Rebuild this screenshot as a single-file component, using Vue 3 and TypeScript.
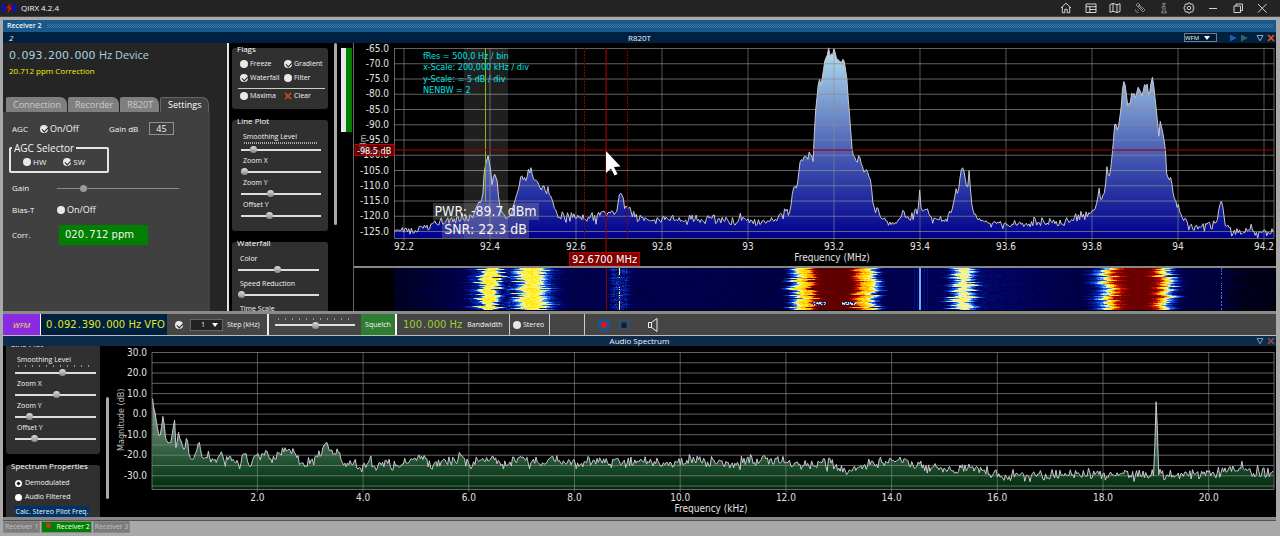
<script setup lang="ts">
import { onMounted, ref } from 'vue'

type Point = [number, number]

function createRandom(seed: number): () => number {
  let state = seed
  return () => {
    state = (state * 1664525 + 1013904223) % 4294967296
    return state / 4294967296
  }
}

function interpolate(points: Point[], x: number): number {
  if (x <= points[0][0]) return points[0][1]
  for (let i = 1; i < points.length; i++) {
    const [x1, y1] = points[i]
    if (x <= x1) {
      const [x0, y0] = points[i - 1]
      return y0 + ((y1 - y0) * (x - x0)) / (x1 - x0 || 1)
    }
  }
  return points[points.length - 1][1]
}

function buildTrace(points: Point[], from: number, to: number, noise: number, max: number, seed: number): string {
  const random = createRandom(seed)
  const out: string[] = []
  for (let x = from; x <= to; x += 1.3) {
    const base = interpolate(points, x)
    const slope = Math.abs(interpolate(points, x + 1) - interpolate(points, x - 1))
    const amplitude = slope > 3 ? noise * 0.3 : noise
    const spike = random() > 0.93 ? noise * 0.9 : 0
    const sum = random() + random() - 1
    const y = Math.min(max, base + sum * amplitude * 1.3 - (random() > 0.5 ? spike : -spike))
    out.push(`${x.toFixed(1)},${y.toFixed(1)}`)
  }
  return out.join(' ')
}

const rfEnvelope: Point[] = [
  [394, 232], [417, 229], [440, 223], [463, 220], [473, 216], [479, 201], [482, 199], [485, 165], [488, 157],
  [491, 171], [492, 185], [494, 173], [497, 178], [499, 203], [503, 215], [510, 218], [516, 197], [520, 183],
  [522, 177], [527, 175], [530, 174], [531, 167], [533, 178], [540, 186], [550, 194], [555, 207], [558, 217],
  [595, 217], [606, 213], [617, 211], [620, 190], [622, 200], [623, 196], [625, 212], [629, 206], [632, 214],
  [640, 219], [700, 219], [740, 221], [770, 222], [780, 218], [787, 211], [790, 212], [793, 188], [797, 188],
  [800, 163], [807, 157], [812, 155], [813, 163], [815, 120], [817, 93], [819, 82], [821, 85], [825, 60],
  [829, 50], [832, 57], [834, 49], [837, 60], [844, 60], [847, 80], [850, 123], [853, 153], [857, 163],
  [859, 155], [862, 167], [867, 168], [871, 183], [873, 203], [876, 213], [877, 205], [880, 215], [887, 222],
  [897, 223], [903, 213], [910, 220], [917, 210], [919, 205], [920, 184], [921, 207], [927, 208], [930, 217],
  [943, 222], [950, 215], [953, 207], [956, 190], [958, 195], [960, 177], [962.5, 163], [965, 177], [966, 187],
  [968, 187], [969, 171], [972, 207], [975, 217], [980, 221], [990, 224], [1027, 223], [1060, 222], [1077, 217],
  [1090, 213], [1097, 203], [1099, 187], [1101, 202], [1105, 190], [1107, 167], [1109, 180], [1111, 167],
  [1113, 147], [1115, 120], [1117, 130], [1119, 125], [1121, 108], [1123.5, 77], [1126, 90], [1128, 108],
  [1130, 100], [1132, 93], [1135, 100], [1138, 88], [1142, 95], [1145, 83], [1150, 93], [1152, 75], [1154, 88],
  [1157, 117], [1159, 138], [1160, 120], [1163, 133], [1166, 153], [1167, 183], [1171, 178], [1173, 193],
  [1178, 207], [1183, 218], [1190, 226], [1210, 225], [1217, 222], [1219, 208], [1221, 202], [1223, 207],
  [1225, 225], [1233, 232], [1274, 232],
]

const audioEnvelope: Point[] = [
  [152, 383], [153, 412], [154, 405], [157, 427], [160, 438], [163.5, 412], [165, 437], [170, 448], [174.7, 419],
  [176, 450], [178, 435], [182, 443], [184, 453], [187, 435], [189, 455], [192, 460], [196, 454], [199, 440],
  [202, 458], [207, 455], [217, 463], [221, 450], [225, 464], [230, 457], [240, 468], [243, 450], [250, 468],
  [255, 453], [258, 458], [267, 455], [273, 463], [285, 447], [288, 454], [292, 448], [297, 457], [308, 468],
  [313, 457], [328, 447], [340, 457], [345, 469], [350, 462], [360, 467], [370, 462], [376, 468], [384, 461],
  [394, 467], [402, 465], [408, 461], [420, 456], [432, 467], [445, 462], [463, 457], [470, 465], [495, 459],
  [505, 464], [520, 458], [535, 465], [553, 457], [560, 463], [590, 462], [640, 462], [660, 466], [690, 459],
  [710, 463], [730, 465], [750, 460], [790, 462], [800, 467], [827, 462], [848, 470], [860, 468], [888, 460],
  [905, 460], [927, 467], [950, 470], [967, 468], [1000, 474], [1009, 481], [1013, 475], [1050, 476], [1080, 474],
  [1110, 475], [1135, 472], [1154, 475], [1156, 401], [1157, 401], [1158, 475], [1200, 474], [1230, 471],
  [1243, 469], [1255, 473], [1274, 471],
]

const rfTrace = buildTrace(rfEnvelope, 394.5, 1274, 4.5, 238, 77)
const audioTrace = buildTrace(audioEnvelope, 152.5, 1274, 5, 487, 2024)

const rfRows = Array.from({ length: 13 }, (_, i) => ({
  y: 48.5 + i * 15.25,
  label: (-65 - i * 5).toFixed(1),
}))
const rfColumns = ['92.2', '92.4', '92.6', '92.8', '93', '93.2', '93.4', '93.6', '93.8', '94', '94.2'].map((label, i) => ({
  x: 404 + i * 86,
  label,
}))
const audioRows = Array.from({ length: 14 }, (_, i) => ({
  y: 352.5 + i * 10.27,
  label: i % 2 === 0 && i < 13 ? (30 - i * 5).toFixed(1) : '',
}))
const audioColumns = Array.from({ length: 10 }, (_, i) => ({
  x: 257.4 + i * 105.7,
  label: (2 + i * 2).toFixed(1),
}))

const infoLines = ['fRes = 500,0 Hz / bin', 'x-Scale: 200,000 kHz / div', 'y-Scale: = 5 dB / div', 'NENBW = 2']

const linePlotSliders = [
  { id: 'rf-smooth', label: 'Smoothing Level', value: 13, ticks: 'fine' },
  { id: 'rf-zoom-x', label: 'Zoom X', value: 0, ticks: '' },
  { id: 'rf-zoom-y', label: 'Zoom Y', value: 36, ticks: '' },
  { id: 'rf-offset-y', label: 'Offset Y', value: 34, ticks: '' },
]
const waterfallSliders = [
  { id: 'wf-color', label: 'Color', value: 48 },
  { id: 'wf-speed', label: 'Speed Reduction', value: 0 },
  { id: 'wf-time', label: 'Time Scale', value: 0 },
]
const audioSliders = [
  { id: 'af-smooth', label: 'Smoothing Level', value: 60, ticks: 'coarse' },
  { id: 'af-zoom-x', label: 'Zoom X', value: 52, ticks: '' },
  { id: 'af-zoom-y', label: 'Zoom Y', value: 15, ticks: '' },
  { id: 'af-offset-y', label: 'Offset Y', value: 21, ticks: '' },
]

const waterfall = ref<HTMLCanvasElement | null>(null)

const wfProfile: Point[] = [
  [394, 0.02], [440, 0.06], [465, 0.09], [478, 0.2], [481, 0.4], [484, 0.54], [494, 0.56], [497, 0.44], [501, 0.2],
  [505, 0.1], [513, 0.2], [518, 0.38], [523, 0.52], [529, 0.56], [538, 0.54], [543, 0.44], [548, 0.26], [556, 0.12],
  [570, 0.08], [608, 0.08], [615, 0.14], [619, 0.19], [623, 0.14], [631, 0.08], [700, 0.08], [785, 0.07], [791, 0.22],
  [796, 0.42], [800, 0.58], [810, 0.67], [813, 0.86], [818, 1], [850, 1], [855, 0.84], [860, 0.67], [868, 0.6],
  [873, 0.42], [878, 0.2], [884, 0.08], [945, 0.1], [951, 0.24], [956, 0.44], [962, 0.49], [968, 0.47], [972, 0.34],
  [978, 0.12], [1080, 0.07], [1093, 0.16], [1103, 0.42], [1108, 0.6], [1114, 0.82], [1125, 0.97], [1148, 0.97],
  [1157, 0.82], [1162, 0.6], [1168, 0.4], [1175, 0.16], [1182, 0.07], [1225, 0.05], [1240, 0.01], [1274, 0],
]
const wfBounds = [489, 510, 532, 575, 619, 700, 834, 900, 920, 940, 962, 1040, 1138, 1200, 1280]
const wfColors: [number, number, number, number][] = [
  [0, 0, 0, 20], [0.1, 0, 0, 88], [0.22, 8, 50, 190], [0.34, 50, 140, 255], [0.43, 225, 240, 235], [0.5, 255, 248, 90],
  [0.6, 255, 228, 10], [0.7, 255, 150, 0], [0.8, 215, 25, 0], [0.92, 130, 0, 0], [1, 94, 0, 0],
]

function wfColor(level: number): [number, number, number] {
  const l = Math.max(0, Math.min(1, level))
  for (let i = 1; i < wfColors.length; i++) {
    const b = wfColors[i]
    if (l <= b[0]) {
      const a = wfColors[i - 1]
      const t = (l - a[0]) / (b[0] - a[0])
      return [a[1] + (b[1] - a[1]) * t, a[2] + (b[2] - a[2]) * t, a[3] + (b[3] - a[3]) * t]
    }
  }
  return [94, 0, 0]
}

onMounted(() => {
  const canvas = waterfall.value
  const context = canvas?.getContext('2d')
  if (!canvas || !context) return
  const { width, height } = canvas
  const image = context.createImageData(width, height)
  const random = createRandom(9)
  for (let row = 0; row < height; row++) {
    const shifts = wfBounds.map(() => (random() + random() - 1) * 8)
    const dash = random()
    const fade = row > 33 && row < 37
    let noise = 0
    for (let col = 0; col < width; col++) {
      const x = 394 + col
      const block = wfBounds.findIndex((b) => x < b)
      let level = interpolate(wfProfile, x + shifts[block])
      noise = noise * 0.5 + (random() - 0.5) * 0.5
      level += noise * (level > 0.15 && level < 0.9 ? 0.2 : 0.05)
      if (Math.abs(x - 619) < 9) level += random() > 0.8 ? 0.09 : 0
      if (x === 619 && (row < 6 || row > 32 || dash > 0.8)) level = 0.5
      if (x === 1221 && dash > 0.55) level = 0.32
      if (x === 920 || x === 919) level = 0.37
      if (x === 914 || x === 917 || x === 924 || x === 927) level = 0.14
      if (fade && ((x > 812 && x < 826) || (x > 841 && x < 856))) level = 0.12 + random() * 0.4
      const [r, g, b] = wfColor(level)
      const offset = (row * width + col) * 4
      image.data[offset] = r
      image.data[offset + 1] = g
      image.data[offset + 2] = b
      image.data[offset + 3] = 255
    }
  }
  context.putImageData(image, 0, 0)
})
</script>

<template>
  <div class="app">
    <header class="titlebar">
      <svg class="logo" viewBox="0 0 16 12" width="16" height="12" fill="none" stroke="#0a0af0" stroke-width="1.5">
        <path d="M2.500 2C0.600 4.500 0.600 7.500 2.500 10M5 3.300C3.900 5 3.900 7 5 8.700M13.500 2C15.400 4.500 15.400 7.500 13.500 10M11 3.300C12.100 5 12.100 7 11 8.700" />
        <path d="M10 1L5 6.500L8 6.300L6.500 11L11.500 5.200L8.500 5.500Z" fill="#f01010" stroke="none" />
      </svg>
      <h1>QIRX 4.2.4</h1>
      <nav class="window-tools">
        <button type="button" aria-label="Home">
          <svg viewBox="0 0 12 12"><path d="M1 6L6 1.200L11 6M2.300 5V10.800H4.800V7.300H7.200V10.800H9.700V5" /></svg>
        </button>
        <button type="button" aria-label="Layout">
          <svg viewBox="0 0 12 12"><path d="M1 2H11V10.500H1ZM1 4.700H11M4.800 4.700V10.500M4.800 7.500H11" /></svg>
        </button>
        <button type="button" aria-label="Map">
          <svg viewBox="0 0 12 12"><path d="M1 2.500L4 1.500L8 2.700L11 1.700V9.500L8 10.500L4 9.300L1 10.300ZM4 1.500V9.300M8 2.700V10.500" /></svg>
        </button>
        <button type="button" aria-label="Satellite">
          <svg viewBox="0 0 12 12" class="muted"><path d="M2 3L4 1L6 3L4 5ZM6.500 7.500L8.500 5.500L11 8L9 10ZM4 3L9 8M6 3.500L8 5.500L6.500 7.500L4.500 5.500ZM1.500 7.500C1.500 9.500 2.500 10.500 4.500 10.500M3.500 7.500L4.500 8.500" /></svg>
        </button>
        <button type="button" aria-label="Information">
          <svg viewBox="0 0 12 12" class="muted"><path d="M5 1.200H7V3H5ZM4 4.500H7V9.500H8.300V11H3.700V9.500H5V6H4Z" /></svg>
        </button>
        <button type="button" aria-label="Options">
          <svg viewBox="0 0 12 12"><path d="M5 1H7L7.500 2.300L9.300 1.900L10.300 3.200L9.700 4.600L11 5.200V6.800L9.700 7.400L10.300 8.800L9.300 10.100L7.500 9.700L7 11H5L4.500 9.700L2.700 10.100L1.700 8.800L2.300 7.400L1 6.800V5.200L2.300 4.600L1.700 3.200L2.700 1.900L4.500 2.300Z" /><circle cx="6" cy="6" r="1.700" /></svg>
        </button>
        <button type="button" aria-label="Minimize">
          <svg viewBox="0 0 12 12"><path d="M2 6.500H10" /></svg>
        </button>
        <button type="button" aria-label="Restore">
          <svg viewBox="0 0 12 12"><path d="M2 4H8.500V10.500H2ZM4 4V2H10.500V8.500H8.500" /></svg>
        </button>
        <button type="button" aria-label="Close">
          <svg viewBox="0 0 12 12"><path d="M2 2L10.500 10.500M10.500 2L2 10.500" /></svg>
        </button>
      </nav>
    </header>

    <main class="window">
      <div class="dock-title"><strong>Receiver 2</strong><span class="grip"></span></div>
      <div class="pane-title">
        <em>2</em>
        <h2>R820T</h2>
        <div class="pane-tools">
          <label class="mode">
            <select aria-label="Demodulation mode"><option>WFM</option></select>
            <i class="caret"></i>
          </label>
          <svg class="play" viewBox="0 0 18 8" width="18" height="8">
            <path d="M0 0.500L7 4L0 7.500Z" fill="#1565ae" />
            <path d="M11 0.500L18 4L11 7.500Z" fill="#2f665f" />
          </svg>
          <button type="button" aria-label="Pane menu"><svg viewBox="0 0 8 8"><path d="M1 1.500H7L4 6.800Z" stroke="#a8b8c8" stroke-width="0.900" /></svg></button>
          <button type="button" aria-label="Close pane"><svg viewBox="0 0 8 8"><path d="M1 1L7 7M7 1L1 7" stroke="#e8501c" stroke-width="1.700" /></svg></button>
        </div>
      </div>

      <section class="receiver">
        <div class="device">
          <p class="freq">0<b>.</b>093<b>.</b>200<b>.</b>000 <span>Hz Device</span></p>
          <p class="correction">20.712 ppm Correction</p>
          <nav class="tabs">
            <button type="button">Connection</button>
            <button type="button">Recorder</button>
            <button type="button">R820T</button>
            <button type="button" class="active">Settings</button>
          </nav>
          <div class="settings">
            <div class="agc-row">
              <span class="name">AGC</span>
              <label class="dot big"><input type="checkbox" checked />On/Off</label>
              <label for="gain-db" class="gain-label">Gain dB</label>
              <input id="gain-db" class="gain-db" type="text" value="45" />
            </div>
            <fieldset>
              <legend>AGC Selector</legend>
              <label class="dot small"><input type="radio" name="agc" />HW</label>
              <label class="dot small"><input type="radio" name="agc" checked />SW</label>
            </fieldset>
            <div class="row gain-row">
              <label class="name" for="gain">Gain</label>
              <input id="gain" class="slider dim" type="range" min="0" max="100" value="20" />
            </div>
            <div class="row">
              <span class="name">Bias-T</span>
              <label class="dot big"><input type="checkbox" />On/Off</label>
            </div>
            <div class="row corr-row">
              <span class="name">Corr.</span>
              <output class="corr">020<b>.</b>712 ppm</output>
            </div>
          </div>
        </div>

        <div class="options">
          <div class="groups">
            <section class="group flags">
              <h3>Flags</h3>
              <div class="flag-grid">
                <label class="dot"><input type="checkbox" />Freeze</label>
                <label class="dot"><input type="checkbox" checked />Gradient</label>
                <label class="dot"><input type="checkbox" checked />Waterfall</label>
                <label class="dot"><input type="checkbox" />Filter</label>
              </div>
              <hr />
              <div class="flag-grid">
                <label class="dot"><input type="checkbox" />Maxima</label>
                <button type="button" class="clear">
                  <svg viewBox="0 0 8 8" width="8" height="8"><path d="M1 1L7 7M7 1L1 7" stroke="#d8481a" stroke-width="1.600" /></svg>Clear
                </button>
              </div>
            </section>
            <section class="group">
              <h3>Line Plot</h3>
              <div v-for="s in linePlotSliders" :key="s.id" class="control" :class="s.ticks">
                <label :for="s.id">{{ s.label }}</label>
                <input :id="s.id" class="slider" type="range" min="0" max="100" :value="s.value" />
              </div>
            </section>
            <section class="group loose">
              <h3>Waterfall</h3>
              <div v-for="s in waterfallSliders" :key="s.id" class="control">
                <label :for="s.id">{{ s.label }}</label>
                <input :id="s.id" class="slider" type="range" min="0" max="100" :value="s.value" />
              </div>
            </section>
          </div>
          <div class="scrollbar"></div>
          <div class="meter"></div>
        </div>

        <div class="plots">
          <svg class="plot" viewBox="354 43 922 223" role="img" aria-label="R820T spectrum">
            <defs>
              <linearGradient id="rf-fill" gradientUnits="userSpaceOnUse" x1="0" y1="48" x2="0" y2="238">
                <stop offset="0" stop-color="#b4e0ee" />
                <stop offset="0.500" stop-color="#5068ba" />
                <stop offset="1" stop-color="#00008c" />
              </linearGradient>
            </defs>
            <polygon :points="`394,238.5 ${rfTrace} 1274,238.5`" fill="url(#rf-fill)" />
            <g class="grid">
              <line v-for="r in rfRows" :key="r.y" x1="394" x2="1274" :y1="r.y" :y2="r.y" />
              <line v-for="c in rfColumns" :key="c.x" :x1="c.x" :x2="c.x" y1="48" y2="241" class="wide" />
              <path d="M394.500 48V238.500H1274V48" />
            </g>
            <polyline :points="rfTrace" class="trace" />
            <rect x="464" y="48" width="44" height="190" fill="#fff" fill-opacity="0.120" />
            <line x1="485.500" x2="485.500" y1="48" y2="202" stroke="#84b818" />
            <g class="ticks end">
              <text v-for="r in rfRows" :key="r.y" x="389" :y="r.y + 3">{{ r.label }}</text>
            </g>
            <g class="ticks middle">
              <text v-for="c in rfColumns" :key="c.x" :x="c.x" y="250">{{ c.label }}</text>
              <text x="832" y="261">Frequency (MHz)</text>
            </g>
            <text class="unit" transform="translate(366 153) rotate(-90)">dBm</text>
            <g class="info">
              <text v-for="(line, i) in infoLines" :key="line" x="423" :y="59 + i * 11.300">{{ line }}</text>
            </g>
            <line x1="394" x2="1274" y1="150" y2="150" class="marker" />
            <line x1="606" x2="606" y1="48" y2="266" class="marker" />
            <path d="M584.500 48V238M627.500 48V238" class="limits" />
            <rect x="355" y="144.500" width="39" height="11" class="tag soft" />
            <text x="357" y="153.500" class="tag-text small">-98.5 dB</text>
            <rect x="569.500" y="252.500" width="70" height="13.500" class="tag" />
            <text x="604.500" y="263" class="tag-text">92.6700 MHz</text>
            <rect x="433" y="203" width="106" height="17" class="readout" />
            <rect x="442" y="220" width="87" height="18" class="readout" />
            <text x="485.500" y="216" class="readout-text">PWR: -89.7 dBm</text>
            <text x="485.500" y="234" class="readout-text">SNR: 22.3 dB</text>
            <path d="M606 151V173L611 168.500L614.500 175.500L617.500 174L614 167L620.500 166.500Z" fill="#fff" />
          </svg>
          <div class="waterfall">
            <canvas ref="waterfall" width="880" height="42"></canvas>
            <i></i>
          </div>
        </div>
      </section>

      <section class="toolbar">
        <button type="button" class="wfm">WFM</button>
        <output class="vfo">0<b>.</b>092<b>.</b>390<b>.</b>000 Hz VFO</output>
        <div class="cell step">
          <label class="dot"><input type="checkbox" checked aria-label="Use step" /></label>
          <label class="step-select">
            <select id="step"><option>1</option></select>
            <i class="caret"></i>
          </label>
          <label for="step">Step (kHz)</label>
        </div>
        <div class="cell squelch">
          <div class="control coarse"><input class="slider" type="range" min="0" max="100" value="50" aria-label="Squelch level" /></div>
          <button type="button">Squelch</button>
        </div>
        <div class="cell bandwidth"><output>100<b>.</b>000 Hz</output><span>Bandwidth</span></div>
        <div class="cell stereo"><label class="dot"><input type="checkbox" />Stereo</label></div>
        <div class="cell blank"></div>
        <div class="audio-buttons">
          <button type="button" aria-label="Record"><svg viewBox="0 0 14 14"><circle cx="7" cy="7" r="6.200" fill="#17568f" /><circle cx="7" cy="7" r="2.900" fill="#f40c0c" /></svg></button>
          <button type="button" aria-label="Stop"><svg viewBox="0 0 14 14"><circle cx="7" cy="7" r="6" fill="#2f4f69" /><rect x="4.500" y="4.500" width="5" height="5.500" fill="#1c1c1c" /></svg></button>
          <button type="button" aria-label="Speaker"><svg viewBox="0 0 14 14"><path d="M2.500 4.500H5.500L11 0.500V13.500L5.500 9.500H2.500ZM5.500 4.500V9.500" fill="none" stroke="#eee" /></svg></button>
        </div>
      </section>

      <div class="pane-title audio-title">
        <h2>Audio Spectrum</h2>
        <div class="pane-tools">
          <button type="button" aria-label="Pane menu"><svg viewBox="0 0 8 8"><path d="M1 1.500H7L4 6.800Z" stroke="#8ea4ba" stroke-width="0.900" /></svg></button>
          <button type="button" aria-label="Close pane"><svg viewBox="0 0 8 8"><path d="M1 1L7 7M7 1L1 7" stroke="#8e4a38" stroke-width="1.700" /></svg></button>
        </div>
      </div>

      <section class="audio">
        <div class="options">
          <div class="groups scrolled">
            <section class="group">
              <h3>Line Plot</h3>
              <div v-for="s in audioSliders" :key="s.id" class="control" :class="s.ticks">
                <label :for="s.id">{{ s.label }}</label>
                <input :id="s.id" class="slider" type="range" min="0" max="100" :value="s.value" />
              </div>
            </section>
            <section class="group">
              <h3>Spectrum Properties</h3>
              <label class="dot ring"><input type="radio" name="spectrum" checked />Demodulated</label>
              <label class="dot ring"><input type="radio" name="spectrum" />Audio Filtered</label>
              <button type="button" class="calc">Calc. Stereo Pilot Freq.</button>
            </section>
          </div>
          <div class="scrollbar"></div>
        </div>
        <svg class="plot" viewBox="110 346 1166 171" role="img" aria-label="Audio spectrum">
          <defs>
            <linearGradient id="af-fill" gradientUnits="userSpaceOnUse" x1="0" y1="370" x2="0" y2="489">
              <stop offset="0" stop-color="#c4d2c8" />
              <stop offset="0.650" stop-color="#3a6648" />
              <stop offset="0.820" stop-color="#194a28" />
              <stop offset="1" stop-color="#002a0c" />
            </linearGradient>
          </defs>
          <polygon :points="`152,489.5 ${audioTrace} 1274,489.5`" fill="url(#af-fill)" />
          <g class="grid">
            <line v-for="r in audioRows" :key="r.y" x1="152" x2="1274" :y1="r.y" :y2="r.y" />
            <line v-for="c in audioColumns" :key="c.x" :x1="c.x" :x2="c.x" y1="352" y2="492" class="wide" />
            <path d="M152 352V489.500H1274V352" />
          </g>
          <polyline :points="audioTrace" class="trace" />
          <g class="ticks end">
            <text v-for="r in audioRows" :key="r.y" x="147" :y="r.y + 3">{{ r.label }}</text>
          </g>
          <g class="ticks middle">
            <text v-for="c in audioColumns" :key="c.x" :x="c.x" y="501">{{ c.label }}</text>
            <text x="711" y="512">Frequency (kHz)</text>
          </g>
          <text class="unit" transform="translate(124 451) rotate(-90)">Magnitude (dB)</text>
        </svg>
      </section>
    </main>

    <footer class="receivers">
      <button type="button">Receiver 1</button>
      <button type="button" class="active"><i></i>Receiver 2</button>
      <button type="button">Receiver 3</button>
    </footer>
  </div>
</template>

<style>
body {
  background: #a9a9a9;
}
</style>

<style scoped>
* {
  box-sizing: border-box;
}

.app {
  min-height: 100vh;
  background: #a9a9a9;
  color: #f4f4f4;
  font: 7px/10px "Open Sans", "Noto Sans", sans-serif;
}

h1,
h2,
h3,
p {
  margin: 0;
  font-weight: 400;
}

b {
  font-weight: 400;
  margin: 0 1px;
}

button,
input,
select {
  font: inherit;
  color: inherit;
  margin: 0;
}

button {
  border: 0;
  padding: 0;
  background: none;
}

.titlebar {
  display: flex;
  align-items: center;
  height: 17px;
  padding: 0 12px 0 1px;
  background: #232323;
  border-bottom: 1px solid #444;
}

.titlebar h1 {
  margin-left: 4px;
  flex: 1;
  font-size: 8px;
  line-height: 16px;
}

.window-tools {
  display: flex;
  justify-content: space-between;
  width: 208px;
}

.window-tools button {
  width: 12px;
  height: 12px;
}

.window-tools svg {
  display: block;
  fill: none;
  stroke: #e4e4e4;
  stroke-width: 0.9;
}

.window-tools .muted {
  stroke: #8c8c8c;
}

.window {
  margin: 3px 4px 0 3px;
  background: #000;
  border-bottom: 1px solid #555;
}

.dock-title {
  display: flex;
  align-items: center;
  gap: 5px;
  height: 12px;
  padding: 0 3px 0 4px;
  background: #19598b;
}

.dock-title strong {
  font-weight: 600;
}

.grip {
  flex: 1;
  height: 4px;
  background: conic-gradient(#3a76a4 25%, transparent 0 50%, #3a76a4 0 75%, transparent 0) 0 0 / 2px 2px;
}

.pane-title {
  display: grid;
  grid-template-columns: 1fr auto 1fr;
  align-items: center;
  height: 11px;
  background: #002040;
  font-size: 8px;
}

.pane-title em {
  padding-left: 6px;
}

.pane-title h2 {
  grid-column: 2;
  font-size: 8px;
}

.pane-tools {
  grid-column: 3;
  display: flex;
  justify-content: flex-end;
  align-items: center;
  gap: 3px;
  padding-right: 1px;
}

.pane-tools button {
  width: 8px;
  height: 8px;
}

.pane-tools button svg {
  display: block;
  fill: none;
}

.play {
  margin: 0 5px 0 10px;
}

.mode,
.step-select {
  display: flex;
  align-items: center;
  width: 33px;
  height: 9px;
  padding-right: 6px;
  border: 1px solid #6b7d90;
  background: #001830;
  font-size: 6px;
}

select {
  flex: 1;
  min-width: 0;
  appearance: none;
  border: 0;
  padding: 0;
  background: transparent;
  line-height: 8px;
}

.caret {
  border: 3px solid transparent;
  border-top: 4px solid #fff;
  border-bottom: 0;
}

.receiver {
  display: grid;
  grid-template-columns: 226px 125px 1fr;
}

.device {
  border-right: 2px solid #e4e4e4;
  background: #252525;
}

.freq {
  padding: 4px 6px 0;
  color: #a9d3e0;
  font: 11px/15px "DejaVu Sans", sans-serif;
}

.freq span {
  font: 11px/15px "Open Sans", "Noto Sans", sans-serif;
}

.correction {
  padding: 1px 6px 0;
  color: #f4f400;
  font-size: 8px;
  line-height: 14px;
}

.tabs {
  display: flex;
  gap: 1px;
  margin-top: 19px;
  padding-left: 3px;
}

.tabs button {
  height: 15px;
  padding: 0 6px 0 7px;
  border-radius: 2px 7px 0 0;
  background: #7f7f7f;
  color: #ccc;
  font-size: 9px;
  line-height: 14px;
}

.tabs .active {
  padding-right: 7px;
  border: 1px solid #666;
  border-bottom: 0;
  background: #404040;
  color: #fff;
}

.settings {
  width: 207px;
  height: 199px;
  padding: 10px 6px 0;
  background: #404040;
  font-size: 8px;
}

.agc-row,
.row {
  display: flex;
  align-items: center;
  padding-left: 3px;
}

.agc-row .name {
  width: 28px;
}

.row {
  margin-top: 10px;
  height: 12px;
}

.row .name {
  width: 45px;
}

.dot {
  display: flex;
  align-items: center;
  gap: 2px;
}

.dot input {
  position: relative;
  flex: none;
  appearance: none;
  width: 8px;
  height: 8px;
  border-radius: 50%;
  background: #e8e8e8;
}

.dot input:checked::after {
  content: "";
  position: absolute;
  left: 3px;
  top: 1px;
  width: 3px;
  height: 5px;
  border: solid #222;
  border-width: 0 1px 1px 0;
  transform: rotate(45deg);
}

.dot.ring input {
  width: 7px;
  height: 7px;
  background: #fff;
}

.dot.ring input:checked::after {
  left: 2px;
  top: 2px;
  width: 3px;
  height: 3px;
  border: 0;
  background: #111;
}

.dot.big {
  font-size: 9px;
}

.dot.small {
  font-size: 8px;
}

.gain-label {
  margin-left: 30px;
  width: 40px;
}

.gain-db {
  width: 25px;
  height: 13px;
  padding: 0;
  border: 1px solid #909090;
  background: transparent;
  text-align: center;
  font-size: 9px;
}

fieldset {
  display: flex;
  gap: 17px;
  width: 100px;
  margin: 7px 0 0;
  padding: 2px 12px 3px;
  border: 2px solid #e4e4e4;
  border-radius: 2px;
}

fieldset label {
  height: 12px;
}

legend {
  margin-left: -11px;
  padding: 0 2px;
  font-size: 10px;
  line-height: 12px;
}

.gain-row {
  margin-top: 9px;
}

.gain-row .slider {
  width: 122px;
}

.corr-row {
  margin-top: 9px;
  height: 20px;
}

.corr-row .corr {
  width: 89px;
  height: 20px;
  margin-left: 2px;
  padding-left: 6px;
  background: #008000;
  font: 10px/20px "DejaVu Sans", sans-serif;
}

.options {
  display: flex;
  contain: size;
  overflow: hidden;
  background: #000;
}

.receiver .options {
  border-right: 1px solid #666;
}

.groups {
  width: 96px;
  margin: 5px 0 0 3px;
}

.groups.scrolled {
  width: 94px;
  margin-top: -3px;
  margin-left: 3px;
}

.group {
  margin-bottom: 11px;
  padding: 0 7px 10px 9px;
  border-radius: 3px;
  background: #303030;
}

.group::before {
  content: "";
  display: table;
}

.group h3 {
  margin: -4px 0 5px -4px;
  color: #fff;
  font-size: 8px;
  line-height: 10px;
}

.flags {
  height: 61px;
  padding: 0 3px 0 6px;
}

.flags h3 {
  margin-left: -1px;
  margin-bottom: 3px;
}

.flag-grid {
  display: grid;
  grid-template-columns: 44px 1fr;
  padding-left: 2px;
}

.flag-grid .dot,
.clear {
  height: 14px;
}

hr {
  height: 1px;
  margin: 3px 0 0;
  border: 0;
  background: #ccc;
}

.clear {
  display: flex;
  align-items: center;
  gap: 2px;
}

.control {
  display: flex;
  flex-direction: column;
}

.control label {
  padding-left: 2px;
  line-height: 11px;
}

.loose {
  padding-left: 6px;
  padding-right: 9px;
}

.group.loose h3 {
  margin-left: -1px;
}

.loose .control {
  margin-bottom: 3px;
}

.control.coarse::before,
.control.fine::before {
  content: "";
  order: 1;
  height: 2px;
  margin: 0 3px;
}

.control.fine::before {
  background: repeating-linear-gradient(90deg, #aaa 0 1px, transparent 1px 2px);
}

.control.coarse::before {
  background: repeating-linear-gradient(90deg, #999 0 1px, transparent 1px 7px);
}

.control .slider {
  order: 2;
}

.slider {
  appearance: none;
  width: 100%;
  height: 11px;
  background: linear-gradient(#ddd, #ddd) center / 100% 2px no-repeat;
}

.slider.dim {
  background: linear-gradient(#888, #888) center / 100% 1px no-repeat;
}

.slider::-webkit-slider-thumb {
  appearance: none;
  width: 7px;
  height: 7px;
  border-radius: 50%;
  background: linear-gradient(#ddd, #888);
}

.slider.dim::-webkit-slider-thumb {
  background: #999;
}

.scrollbar {
  width: 3px;
  height: 182px;
  margin-left: 6px;
  border-radius: 2px;
  background: #a8a8a8;
}

.meter {
  width: 11px;
  height: 84px;
  margin: 5px 0 0 4px;
  border: solid #008000;
  border-width: 0 6px 0 0;
  background: #e8e8e8;
}

.plots,
.audio .plot {
  min-width: 0;
}

.plot {
  display: block;
  width: 100%;
  font-family: "DejaVu Sans Condensed", "Noto Sans", sans-serif;
}

.grid {
  fill: none;
  stroke: #8c8c8c;
  stroke-opacity: 0.7;
}

.grid .wide {
  stroke-opacity: 0.6;
}

.trace {
  fill: none;
  stroke: #c8c8d0;
}

.ticks {
  fill: #e0e0e0;
  font-size: 10px;
}

.end {
  text-anchor: end;
}

.middle {
  text-anchor: middle;
}

.unit {
  fill: #bbb;
  font-size: 9px;
}

.info {
  fill: #00e4e4;
  font-size: 9px;
}

.marker {
  stroke: #a00000;
  stroke-opacity: 0.75;
  stroke-width: 1.5;
}

.limits {
  stroke: #8c0000;
  stroke-dasharray: 2 1;
}

.tag {
  fill: #800000;
  stroke: #c00000;
}

.soft {
  fill-opacity: 0.7;
}

.tag-text {
  fill: #fff;
  font-size: 11px;
  text-anchor: middle;
}

.tag-text.small {
  font-size: 9px;
  text-anchor: start;
}

.readout {
  fill: #a0a0a0;
  fill-opacity: 0.3;
}

.readout-text {
  fill: #f4f4f4;
  font-size: 14px;
  text-anchor: middle;
}

.waterfall {
  position: relative;
  border-top: 2px solid #888;
  padding: 0 2px 0 40px;
}

.waterfall canvas {
  display: block;
  width: 100%;
  height: 42px;
}

.waterfall i {
  position: absolute;
  top: 0;
  bottom: 0;
  left: 27.3%;
  width: 1px;
  background: #900000;
}

.toolbar {
  display: flex;
  border-top: 3px solid #8a8a8a;
  border-bottom: 1px solid #bbb;
  background: #454545;
}

.toolbar > * {
  height: 21px;
}

.wfm {
  width: 38px;
  border-right: 1px solid #fff;
  background: #8a2be2;
  color: #f0e040;
  font-size: 8px;
  font-style: italic;
}

.vfo {
  width: 126px;
  padding-left: 5px;
  background: #002040;
  color: #e0e820;
  font: 10px/21px "DejaVu Sans", sans-serif;
  white-space: nowrap;
}

.cell {
  display: flex;
  align-items: center;
  border-right: 1px solid #ccc;
}

.step {
  width: 102px;
  padding-left: 8px;
  border-right: 2px solid #eee;
  white-space: nowrap;
}

.step-select {
  height: 12px;
  margin: 0 4px 0 7px;
  padding: 0 4px 0 10px;
  border-color: #666;
  background: #222;
  font-size: 7px;
}

.squelch {
  width: 128px;
  padding-left: 6px;
  border-right: 2px solid #fff;
  justify-content: space-between;
}

.squelch .control {
  width: 80px;
  margin-bottom: 1px;
}

.squelch button {
  width: 34px;
  height: 21px;
  background: #2e7d32;
}

.bandwidth {
  width: 113px;
  padding-left: 6px;
  gap: 5px;
}

.bandwidth output {
  color: #9acd32;
  font: 10px/21px "DejaVu Sans", sans-serif;
}

.stereo {
  width: 40px;
  padding-left: 3px;
}

.blank {
  width: 35px;
}

.audio-buttons {
  display: flex;
  align-items: center;
  gap: 6px;
  padding-left: 12px;
}

.audio-buttons button {
  width: 14px;
  height: 14px;
}

.audio-buttons button:last-child {
  margin-left: 9px;
}

.audio-buttons svg {
  display: block;
}

.audio-title {
  height: 10px;
  background: #0d2c4c;
}

.audio {
  display: grid;
  grid-template-columns: 107px 1fr;
  border-bottom: 3px solid #888;
}

.audio .group {
  padding-right: 4px;
}

.audio .scrollbar {
  height: 102px;
  margin-top: 51px;
}

.ring {
  height: 14px;
  gap: 3px;
}

.calc {
  width: 74px;
  height: 11px;
  margin-top: 2px;
  background: #003468;
  line-height: 11px;
  white-space: nowrap;
}

.receivers {
  display: flex;
  gap: 1px;
  padding-left: 3px;
}

.receivers button {
  height: 12px;
  padding: 0 1px;
  border: 1px solid #888;
  background: #7c7c7c;
  color: #c4c4c4;
}

.receivers .active {
  display: flex;
  align-items: center;
  gap: 5px;
  padding-left: 4px;
  background: #008000;
  color: #fff;
}

.receivers i {
  width: 5px;
  height: 5px;
  margin-bottom: 3px;
  border-radius: 50%;
  background: #c83232;
}
</style>
